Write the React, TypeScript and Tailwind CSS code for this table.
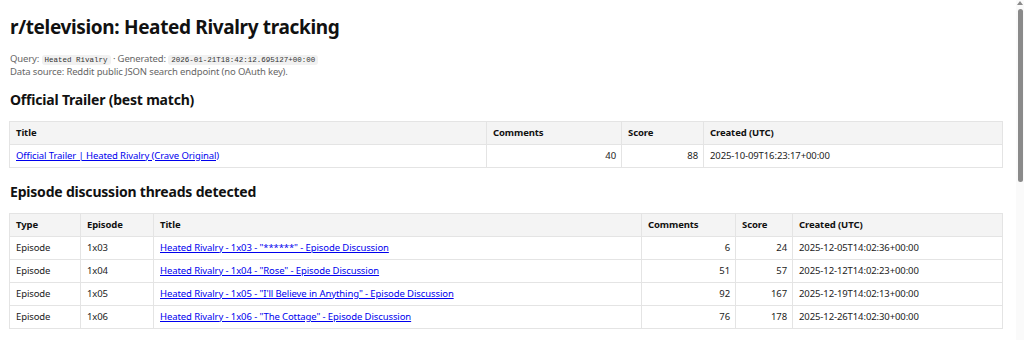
import type { ReactNode } from "react";

/**
 * Report page: subreddit tracking for one show. Two plain bordered tables,
 * a meta line with inline code chips, and a thin scrollbar strip on the right.
 */

interface TrailerRow {
  title: string;
  comments: number;
  score: number;
  created: string;
}

interface EpisodeRow {
  type: string;
  episode: string;
  title: string;
  comments: number;
  score: number;
  created: string;
}

const trailer: TrailerRow = {
  title: "Official Trailer | Heated Rivalry (Crave Original)",
  comments: 40,
  score: 88,
  created: "2025-10-09T16:23:17+00:00",
};

const episodes: EpisodeRow[] = [
  {
    type: "Episode",
    episode: "1x03",
    title: 'Heated Rivalry - 1x03 - "******" - Episode Discussion',
    comments: 6,
    score: 24,
    created: "2025-12-05T14:02:36+00:00",
  },
  {
    type: "Episode",
    episode: "1x04",
    title: 'Heated Rivalry - 1x04 - "Rose" - Episode Discussion',
    comments: 51,
    score: 57,
    created: "2025-12-12T14:02:23+00:00",
  },
  {
    type: "Episode",
    episode: "1x05",
    title: 'Heated Rivalry - 1x05 - "I\'ll Believe in Anything" - Episode Discussion',
    comments: 92,
    score: 167,
    created: "2025-12-19T14:02:13+00:00",
  },
  {
    type: "Episode",
    episode: "1x06",
    title: 'Heated Rivalry - 1x06 - "The Cottage" - Episode Discussion',
    comments: 76,
    score: 178,
    created: "2025-12-26T14:02:30+00:00",
  },
];

const th =
  "h-[23px] border border-[#e4e4e4] bg-[#f4f4f4] px-[6px] text-left text-[9.5px] font-bold tracking-[-0.1px] text-[#111]";
const td =
  "h-[23px] border border-[#e4e4e4] px-[6px] text-[9.5px] tracking-[-0.1px] text-[#222]";
const tdNum = td + " text-right pr-[5px]";
const link = "text-[#0000ee] underline underline-offset-[1px]";

function Code({ children }: { children: ReactNode }) {
  return (
    <code className="rounded-[3px] bg-[#f1f1f1] px-[3px] py-[1px] font-['Liberation_Mono','DejaVu_Sans_Mono',monospace] text-[7.5px] tracking-normal text-[#333]">
      {children}
    </code>
  );
}

export default function App() {
  return (
    <div className="flex h-[340px] w-[1024px] overflow-hidden bg-white font-['Noto_Sans','Open_Sans',sans-serif] text-[#111]">
      <main className="flex w-[1016px] flex-col pl-[9px] pr-[14px]">
        <h1 className="mt-[15px] pl-[1px] text-[19px] font-bold leading-[24px] tracking-[-0.35px]">
          r/television: Heated Rivalry tracking
        </h1>
        <div className="mt-[14px] pl-[1px] text-[9.5px] leading-[12px] tracking-[-0.15px] text-[#666]">
          <p>
            Query:<span className="tracking-normal"> </span>
            <Code>Heated Rivalry</Code> · Generated:{" "}
            <Code>2026-01-21T18:42:12.695127+00:00</Code>
          </p>
          <p>Data source: Reddit public JSON search endpoint (no OAuth key).</p>
        </div>

        <h2 className="mt-[13px] pl-[1px] text-[14px] font-bold leading-[18px] tracking-[-0.2px]">
          Official Trailer (best match)
        </h2>
        <table className="mt-[12px] w-[993px] table-fixed border-collapse">
          <colgroup>
            <col className="w-[477px]" />
            <col className="w-[135px]" />
            <col className="w-[82px]" />
            <col className="w-[299px]" />
          </colgroup>
          <thead>
            <tr>
              <th className={th}>Title</th>
              <th className={th}>Comments</th>
              <th className={th}>Score</th>
              <th className={th}>Created (UTC)</th>
            </tr>
          </thead>
          <tbody>
            <tr>
              <td className={td}>
                <a href="#" className={link}>
                  {trailer.title}
                </a>
              </td>
              <td className={tdNum}>{trailer.comments}</td>
              <td className={tdNum}>{trailer.score}</td>
              <td className={td}>{trailer.created}</td>
            </tr>
          </tbody>
        </table>

        <h2 className="mt-[15px] pl-[1px] text-[14px] font-bold leading-[18px] tracking-[-0.2px]">
          Episode discussion threads detected
        </h2>
        <table className="mt-[12px] w-[993px] table-fixed border-collapse">
          <colgroup>
            <col className="w-[71px]" />
            <col className="w-[73px]" />
            <col className="w-[488px]" />
            <col className="w-[94px]" />
            <col className="w-[57px]" />
            <col className="w-[210px]" />
          </colgroup>
          <thead>
            <tr>
              <th className={th}>Type</th>
              <th className={th}>Episode</th>
              <th className={th}>Title</th>
              <th className={th}>Comments</th>
              <th className={th}>Score</th>
              <th className={th}>Created (UTC)</th>
            </tr>
          </thead>
          <tbody>
            {episodes.map((e) => (
              <tr key={e.episode}>
                <td className={td}>{e.type}</td>
                <td className={td}>{e.episode}</td>
                <td className={td}>
                  <a href="#" className={link}>
                    {e.title}
                  </a>
                </td>
                <td className={tdNum}>{e.comments}</td>
                <td className={tdNum}>{e.score}</td>
                <td className={td}>{e.created}</td>
              </tr>
            ))}
          </tbody>
        </table>
      </main>

      {/* scrollbar strip */}
      <div className="flex w-[8px] flex-col items-center bg-[#fafafa] pt-[1px]">
        <div className="h-0 w-0 border-x-[3px] border-b-[4px] border-x-transparent border-b-[#8a8a8a]" />
        <div className="mt-[4px] h-[173px] w-[5px] rounded-full bg-[#8a8a8a]" />
      </div>
    </div>
  );
}
